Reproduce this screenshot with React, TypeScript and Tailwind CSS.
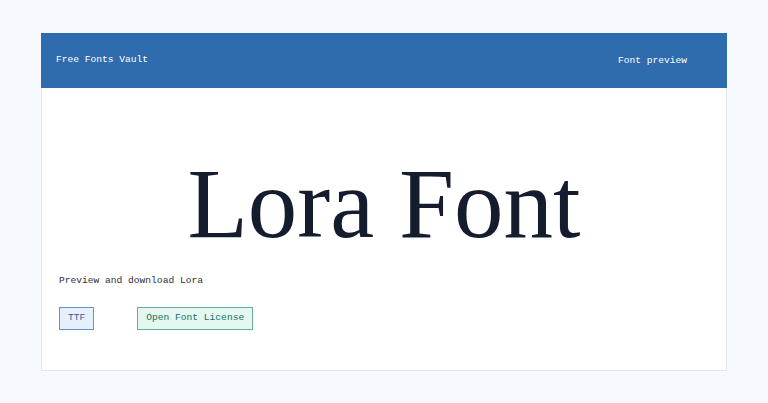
const mono = { fontFamily: '"Liberation Mono", monospace' };

const Badge = ({ label, tone }: { label: string; tone: "blue" | "teal" }) => {
  const cls =
    tone === "blue"
      ? "border-[#5f93d8] bg-[#e6f0fd] text-[#2b5c9c]"
      : "border-[#62ad9a] bg-[#e4f7f0] text-[#17705b]";
  return (
    <span
      className={`flex h-[23px] items-center border px-[8px] text-[9.6px] ${cls}`}
      style={mono}
    >
      {label}
    </span>
  );
};

export default function App() {
  return (
    <div className="min-h-screen bg-[#f6f9fe] px-[41px] pt-[33px]">
      <div className="border border-[#e1e7ef] bg-white">
        <header
          className="-m-px flex h-[55px] items-center justify-between bg-[#2f6cad] pl-[15px] pr-[40px] text-[9.6px] text-white"
          style={mono}
        >
          <span className="-mt-[1px]">Free Fonts Vault</span>
          <span className="mt-[1px]">Font preview</span>
        </header>
        <main className="px-[17px] pb-[40px] pt-[67px]">
          <h1
            className="h-[100px] text-center text-[99px] leading-[100px] text-[#141c2d]"
            style={{ fontFamily: '"Liberation Serif", serif' }}
          >
            Lora Font
          </h1>
          <p className="mt-[20px] text-[9.6px] leading-[14px] text-[#2b2f3a]" style={mono}>
            Preview and download Lora
          </p>
          <div className="mt-[19px] flex gap-[43px]">
            <Badge label="TTF" tone="blue" />
            <Badge label="Open Font License" tone="teal" />
          </div>
        </main>
      </div>
    </div>
  );
}
